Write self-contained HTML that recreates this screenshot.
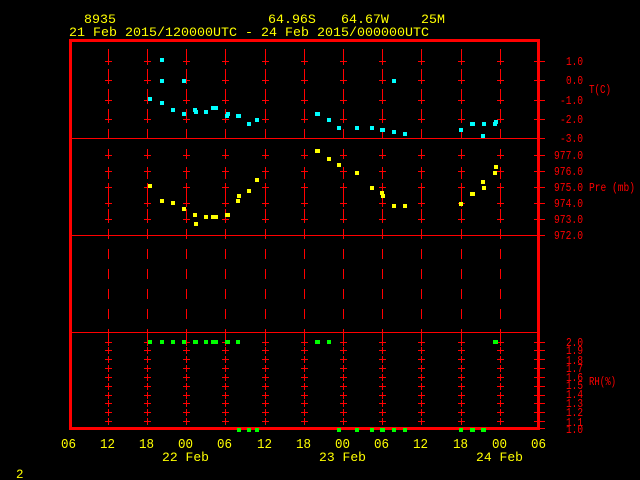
<!DOCTYPE html>
<html>
<head>
<meta charset="utf-8">
<style>
html,body{margin:0;padding:0;background:#000;width:640px;height:480px;overflow:hidden}
svg{display:block}
text{font-family:"Liberation Mono",monospace;white-space:pre}
.y{fill:#ff0;font-size:13.3px}
.b{fill:#ff0;font-size:13.5px}
.r{fill:#f00;font-size:12px}
.l{fill:#f00;font-size:11.5px}
</style>
</head>
<body>
<svg width="640" height="480" viewBox="0 0 640 480" xmlns="http://www.w3.org/2000/svg">
<rect width="640" height="480" fill="#000"/>
<defs>
<g id="col">
<path shape-rendering="crispEdges" fill="none" stroke="#f00" stroke-width="1" d="M.5 49v10M.5 69v10M.5 89v10M.5 109v10M.5 129v10M.5 149v10M.5 169v10M.5 189v10M.5 209v10M.5 229v10M.5 249v10M.5 269v10M.5 289v10M.5 309v10M.5 329v10
M-3 61.5h7M.5 57v8M-3 80.5h7M.5 76v8M-3 100.5h7M.5 96v8M-3 119.5h7M.5 115v8
M-3 155.5h7M.5 151v8M-3 171.5h7M.5 167v8M-3 187.5h7M.5 183v8M-3 203.5h7M.5 199v8M-3 219.5h7M.5 215v8
M-3 342.5h7M.5 339v7M-3 350.5h7M.5 347v7M-3 359.5h7M.5 356v7M-3 368.5h7M.5 365v7M-3 377.5h7M.5 374v7M-3 386.5h7M.5 383v7M-3 395.5h7M.5 392v7M-3 403.5h7M.5 400v7M-3 412.5h7M.5 409v7M-3 421.5h7M.5 418v7"/>
</g>
</defs>
<use href="#col" x="108"/><use href="#col" x="147"/><use href="#col" x="186"/><use href="#col" x="225"/><use href="#col" x="265"/><use href="#col" x="304"/><use href="#col" x="343"/><use href="#col" x="382"/><use href="#col" x="421"/><use href="#col" x="461"/><use href="#col" x="500"/>
<path shape-rendering="crispEdges" fill="none" stroke="#f00" stroke-width="1" d="M72 138.5H545M72 235.5H545M72 332.5H538
M534 61.5h11M534 80.5h11M534 100.5h11M534 119.5h11
M534 155.5h11M534 171.5h11M534 187.5h11M534 203.5h11M534 219.5h11
M534 342.5h11M534 350.5h11M534 359.5h11M534 368.5h11M534 377.5h11M534 386.5h11M534 395.5h11M534 403.5h11M534 412.5h11M534 421.5h11M534 428.5h11"/>
<path shape-rendering="crispEdges" fill="#f00" d="M69 39H540V42H69ZM69 42H72V427H69ZM537 42H540V427H537ZM69 427H540V430H69Z"/>
<path shape-rendering="crispEdges" fill="#0ff" d="M160 58h4v4h-4zM160 79h4v4h-4zM182 79h4v4h-4zM148 97h4v4h-4zM160 101h4v4h-4zM171 108h4v4h-4zM182 112h4v4h-4zM193 108h4v4h-4zM194 110h4v4h-4zM204 110h4v4h-4zM211 106h4v4h-4zM214 106h4v4h-4zM225 114h4v4h-4zM226 112h4v4h-4zM236 114h4v4h-4zM237 114h4v4h-4zM247 122h4v4h-4zM255 118h4v4h-4zM315 112h4v4h-4zM316 112h4v4h-4zM327 118h4v4h-4zM337 126h4v4h-4zM355 126h4v4h-4zM370 126h4v4h-4zM380 128h4v4h-4zM381 128h4v4h-4zM392 130h4v4h-4zM403 132h4v4h-4zM392 79h4v4h-4zM459 128h4v4h-4zM470 122h4v4h-4zM471 122h4v4h-4zM482 122h4v4h-4zM481 134h4v4h-4zM493 122h4v4h-4zM494 120h4v4h-4z"/>
<path shape-rendering="crispEdges" fill="#ff0" d="M315 149h4v4h-4zM316 149h4v4h-4zM148 184h4v4h-4zM160 199h4v4h-4zM171 201h4v4h-4zM182 207h4v4h-4zM193 213h4v4h-4zM194 222h4v4h-4zM204 215h4v4h-4zM211 215h4v4h-4zM214 215h4v4h-4zM225 213h4v4h-4zM226 213h4v4h-4zM236 199h4v4h-4zM237 194h4v4h-4zM247 189h4v4h-4zM255 178h4v4h-4zM327 157h4v4h-4zM337 163h4v4h-4zM355 171h4v4h-4zM370 186h4v4h-4zM380 191h4v4h-4zM381 194h4v4h-4zM392 204h4v4h-4zM403 204h4v4h-4zM459 202h4v4h-4zM470 192h4v4h-4zM471 192h4v4h-4zM482 186h4v4h-4zM481 180h4v4h-4zM493 171h4v4h-4zM494 165h4v4h-4z"/>
<path shape-rendering="crispEdges" fill="#0f0" d="M148 340h4v4h-4zM160 340h4v4h-4zM171 340h4v4h-4zM182 340h4v4h-4zM193 340h4v4h-4zM194 340h4v4h-4zM204 340h4v4h-4zM211 340h4v4h-4zM214 340h4v4h-4zM225 340h4v4h-4zM226 340h4v4h-4zM236 340h4v4h-4zM315 340h4v4h-4zM316 340h4v4h-4zM327 340h4v4h-4zM493 340h4v4h-4zM494 340h4v4h-4z
M237 428h4v4h-4zM247 428h4v4h-4zM255 428h4v4h-4zM337 428h4v4h-4zM355 428h4v4h-4zM370 428h4v4h-4zM380 428h4v4h-4zM381 428h4v4h-4zM392 428h4v4h-4zM403 428h4v4h-4zM459 428h4v4h-4zM470 428h4v4h-4zM471 428h4v4h-4zM481 428h4v4h-4zM482 428h4v4h-4z"/>
<text class="y" x="84" y="23">8935</text>
<text class="y" x="268" y="23">64.96S</text>
<text class="y" x="341" y="23">64.67W</text>
<text class="y" x="421" y="23">25M</text>
<text class="y" x="69" y="36" textLength="360" lengthAdjust="spacingAndGlyphs">21 Feb 2015/120000UTC - 24 Feb 2015/000000UTC</text>
<text class="r" x="566" y="65" textLength="17" lengthAdjust="spacingAndGlyphs">1.0</text>
<text class="r" x="566" y="84" textLength="17" lengthAdjust="spacingAndGlyphs">0.0</text>
<text class="r" x="560" y="104" textLength="23" lengthAdjust="spacingAndGlyphs">-1.0</text>
<text class="r" x="560" y="123" textLength="23" lengthAdjust="spacingAndGlyphs">-2.0</text>
<text class="r" x="560" y="142" textLength="23" lengthAdjust="spacingAndGlyphs">-3.0</text>
<text class="r" x="554" y="159" textLength="29" lengthAdjust="spacingAndGlyphs">977.0</text>
<text class="r" x="554" y="175" textLength="29" lengthAdjust="spacingAndGlyphs">976.0</text>
<text class="r" x="554" y="191" textLength="29" lengthAdjust="spacingAndGlyphs">975.0</text>
<text class="r" x="554" y="207" textLength="29" lengthAdjust="spacingAndGlyphs">974.0</text>
<text class="r" x="554" y="223" textLength="29" lengthAdjust="spacingAndGlyphs">973.0</text>
<text class="r" x="554" y="239" textLength="29" lengthAdjust="spacingAndGlyphs">972.0</text>
<text class="r" x="566" y="346" textLength="17" lengthAdjust="spacingAndGlyphs">2.0</text>
<text class="r" x="566" y="354" textLength="17" lengthAdjust="spacingAndGlyphs">1.9</text>
<text class="r" x="566" y="364" textLength="17" lengthAdjust="spacingAndGlyphs">1.8</text>
<text class="r" x="566" y="372" textLength="17" lengthAdjust="spacingAndGlyphs">1.7</text>
<text class="r" x="566" y="381" textLength="17" lengthAdjust="spacingAndGlyphs">1.6</text>
<text class="r" x="566" y="389" textLength="17" lengthAdjust="spacingAndGlyphs">1.5</text>
<text class="r" x="566" y="398" textLength="17" lengthAdjust="spacingAndGlyphs">1.4</text>
<text class="r" x="566" y="407" textLength="17" lengthAdjust="spacingAndGlyphs">1.3</text>
<text class="r" x="566" y="416" textLength="17" lengthAdjust="spacingAndGlyphs">1.2</text>
<text class="r" x="566" y="426" textLength="17" lengthAdjust="spacingAndGlyphs">1.1</text>
<text class="r" x="566" y="433" textLength="17" lengthAdjust="spacingAndGlyphs">1.0</text>
<text class="l" x="589" y="93" textLength="22" lengthAdjust="spacingAndGlyphs">T(C)</text>
<text class="l" x="589" y="191" textLength="46" lengthAdjust="spacingAndGlyphs">Pre (mb)</text>
<text class="l" x="589" y="385" textLength="27" lengthAdjust="spacingAndGlyphs">RH(%)</text>
<text class="b" x="61" y="448" textLength="15" lengthAdjust="spacingAndGlyphs">06</text>
<text class="b" x="100" y="448" textLength="15" lengthAdjust="spacingAndGlyphs">12</text>
<text class="b" x="139" y="448" textLength="15" lengthAdjust="spacingAndGlyphs">18</text>
<text class="b" x="178" y="448" textLength="15" lengthAdjust="spacingAndGlyphs">00</text>
<text class="b" x="217" y="448" textLength="15" lengthAdjust="spacingAndGlyphs">06</text>
<text class="b" x="257" y="448" textLength="15" lengthAdjust="spacingAndGlyphs">12</text>
<text class="b" x="296" y="448" textLength="15" lengthAdjust="spacingAndGlyphs">18</text>
<text class="b" x="335" y="448" textLength="15" lengthAdjust="spacingAndGlyphs">00</text>
<text class="b" x="374" y="448" textLength="15" lengthAdjust="spacingAndGlyphs">06</text>
<text class="b" x="413" y="448" textLength="15" lengthAdjust="spacingAndGlyphs">12</text>
<text class="b" x="453" y="448" textLength="15" lengthAdjust="spacingAndGlyphs">18</text>
<text class="b" x="492" y="448" textLength="15" lengthAdjust="spacingAndGlyphs">00</text>
<text class="b" x="531" y="448" textLength="15" lengthAdjust="spacingAndGlyphs">06</text>
<text class="y" x="162" y="461" textLength="47" lengthAdjust="spacingAndGlyphs">22 Feb</text>
<text class="y" x="319" y="461" textLength="47" lengthAdjust="spacingAndGlyphs">23 Feb</text>
<text class="y" x="476" y="461" textLength="47" lengthAdjust="spacingAndGlyphs">24 Feb</text>
<text class="y" x="16" y="478" style="font-size:12.5px">2</text>
</svg>
</body>
</html>
